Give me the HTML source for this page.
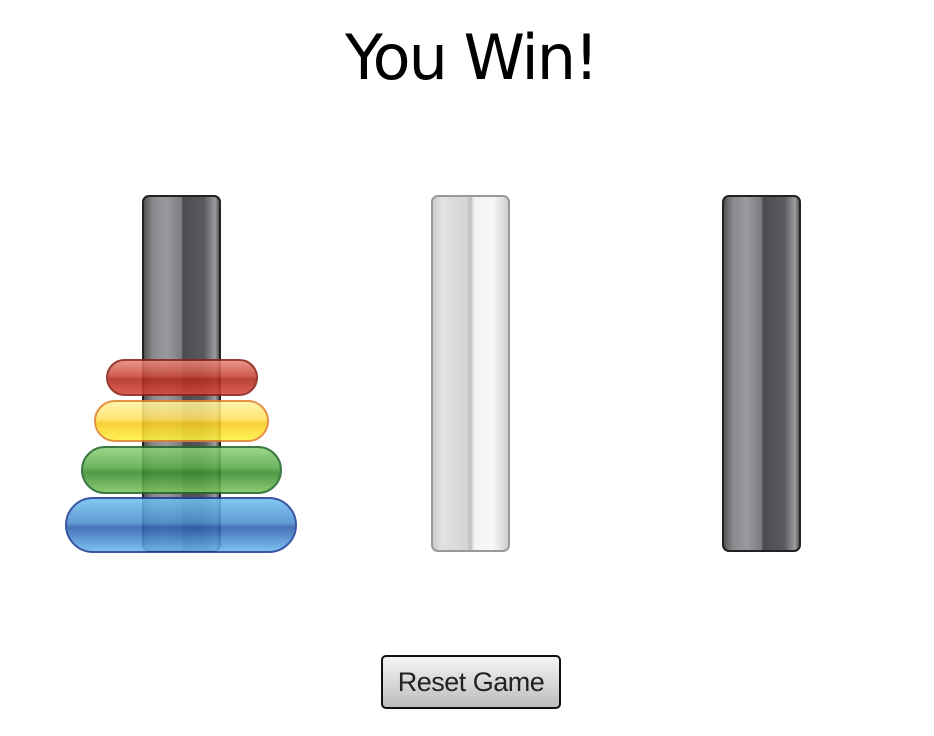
<!DOCTYPE html>
<html><head><style>
body{margin:0;width:934px;height:736px;background:#fff;position:relative;overflow:hidden;font-family:"DejaVu Sans","Liberation Sans",sans-serif}
h1{position:absolute;top:22px;left:0;width:942px;margin:0;text-align:center;font-weight:normal;font-size:62px;letter-spacing:-2px;line-height:72px;color:#000}
.peg{position:absolute;top:195px;width:75px;height:353px;border:2px solid #222;border-radius:7px;box-sizing:content-box}
.dark{background:linear-gradient(90deg,#555 0%,#8a8a8e 12%,#9a9a9e 30%,#7c7c80 50%,#4c4c50 52%,#5a5a5e 80%,#9c9ca0 95%,#555 100%)}
.light{border-color:#999;background:linear-gradient(90deg,#ccc 0%,#e2e2e4 12%,#d5d5d8 45%,#bdbdc0 50%,#f2f2f2 55%,#f7f7f7 80%,#d0d0d2 100%)}
.disk{position:absolute;border-radius:999px;opacity:.88;box-sizing:border-box;border:2px solid}
.btn{position:absolute;left:381px;top:655px;width:180px;height:54px;box-sizing:border-box;border:2px solid #111;border-radius:5px;background:linear-gradient(#f4f4f4,#bdbdbd);font-family:"Liberation Sans",Arial,sans-serif;font-size:27px;letter-spacing:-0.5px;color:#222;text-align:center;line-height:50px}
</style></head><body>
<h1>You Win!</h1>
<div class="peg dark" style="left:142px"></div>
<div class="peg light" style="left:431px"></div>
<div class="peg dark" style="left:722px"></div>
<div class="disk" style="left:106px;top:359px;width:152px;height:37px;border-color:#8a2218;background:linear-gradient(#e9857a,#c94a3a 45%,#b02a1c 55%,#d8463a)"></div>
<div class="disk" style="left:94px;top:400px;width:175px;height:42px;border-color:#e0822a;background:linear-gradient(#fff3a0,#ffe262 45%,#f7cc1e 55%,#fff040)"></div>
<div class="disk" style="left:81px;top:446px;width:201px;height:48px;border-color:#21672a;background:linear-gradient(#8ed07a,#5aaa48 45%,#3a8a2e 55%,#7cc45e)"></div>
<div class="disk" style="left:65px;top:497px;width:232px;height:56px;border-color:#1e3f98;background:linear-gradient(#6fc0f0,#4f8ed0 45%,#2f5fb0 55%,#6ab8ee)"></div>
<div class="btn">Reset Game</div>
</body></html>
